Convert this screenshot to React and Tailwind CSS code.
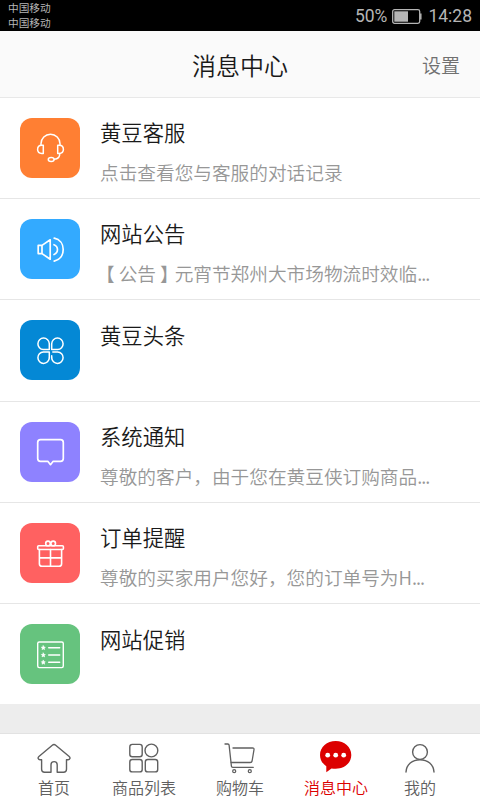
const line = {
  fill: 'none',
  stroke: 'currentColor',
  strokeLinecap: 'round',
  strokeLinejoin: 'round',
};

function HeadsetIcon() {
  return (
    <svg {...line} strokeWidth="1.5" viewBox="0 0 60 60" className="size-[60px]">
      <path d="M21 27v-1.200a9.500 9.500 0 0 1 19 0V27" />
      <path d="M23.300 27.200h-1.500c-2.700 0-4.200 1.800-4.200 4.100s1.500 4.100 4.200 4.100h1.500z" />
      <path d="M37.700 27.200h1.500c2.700 0 4.200 1.800 4.200 4.100s-1.500 4.100-4.200 4.100h-1.500z" />
      <path d="M39.800 35.500c0 3.500-1.800 5.500-5.500 5.800" />
      <ellipse cx="31.200" cy="41.500" rx="2.900" ry="2" />
    </svg>
  );
}

function SpeakerIcon() {
  return (
    <svg {...line} strokeWidth="1.7" viewBox="0 0 60 60" className="size-[60px]">
      <path d="M22 26.400h-3.800v8.200H22zM22 26.400l8.200-5.600v19.400L22 34.600" />
      <path d="M34 25.700a5.200 5.200 0 0 1 0 9.800" />
      <path d="M34.200 19.200c5.800 1.200 9 5.900 9 11.400s-3.200 10.200-9 11.500" />
    </svg>
  );
}

function CloverIcon() {
  return (
    <svg {...line} strokeWidth="1.5" viewBox="0 0 60 60" className="size-[60px]">
      <path d="M29.300 29.500h-6a5.700 5.700 0 1 1 6-5.900z" />
      <path d="M31.700 29.500h6a5.700 5.700 0 1 0-6-5.900z" />
      <path d="M29.300 32h-6a5.700 5.700 0 1 0 6 5.900z" />
      <path d="M32.800 32h4.900a5.700 5.700 0 1 1-6 5.900v-2.200" />
    </svg>
  );
}

function BubbleIcon() {
  return (
    <svg {...line} strokeWidth="1.7" viewBox="0 0 60 60" className="size-[60px]">
      <path d="M20.500 17.700h20a2.800 2.800 0 0 1 2.800 2.800v16a2.800 2.800 0 0 1-2.800 2.800h-7.300l-2.700 3.400-2.700-3.400h-7.300a2.800 2.800 0 0 1-2.800-2.800v-16a2.800 2.800 0 0 1 2.800-2.800z" />
    </svg>
  );
}

function GiftIcon() {
  return (
    <svg {...line} strokeWidth="1.600" viewBox="0 0 60 60" className="size-[60px]">
      <rect x="17.700" y="22.800" width="25.700" height="3.700" rx="1" />
      <path d="M19.400 26.500v14.200c0 1.600 1 2.600 2.600 2.600h17c1.600 0 2.600-1 2.600-2.600V26.500M30.500 26.500v16.800M19.400 34.900h22.200" />
      <circle cx="28" cy="20.400" r="2.300" />
      <circle cx="33.200" cy="20.400" r="2.300" />
    </svg>
  );
}

function ListIcon() {
  const star = (y) => (
    <path
      key={y}
      d={`M23.300 ${y - 2}l.6 1.300 1.400.2-1 1 .3 1.400-1.300-.7-1.300.7.300-1.400-1-1 1.400-.2z`}
      fill="currentColor"
      strokeWidth="0.600"
    />
  );
  return (
    <svg {...line} strokeWidth="1.400" viewBox="0 0 60 60" className="size-[60px]">
      <rect x="17.700" y="18" width="25.600" height="25.600" rx="1.500" />
      {[23.700, 31, 38.300].map(star)}
      <path d="M28.700 23.700h11M28.700 31h11M28.700 38.300h11" />
    </svg>
  );
}

function HomeIcon() {
  return (
    <svg {...line} strokeWidth="1.400" viewBox="0 0 36 32" className="h-8 w-9">
      <path d="M18 2.500c.6 0 1.100.2 1.700.7l13.500 11.300c1.500 1.300.7 3.200-1.100 3.200h-1.600v9.500c0 2-1 3-3 3h-6.300v-7.400c0-4.200-6.200-4.200-6.200 0v7.400H8.600c-2 0-3-1-3-3v-9.500H4c-1.800 0-2.600-1.900-1.100-3.200L16.300 3.200c.6-.5 1.100-.7 1.700-.7z" />
    </svg>
  );
}

function GoodsIcon() {
  return (
    <svg {...line} strokeWidth="1.400" viewBox="0 0 36 32" className="h-8 w-9">
      <rect x="3.800" y="2.400" width="12.400" height="12.400" rx="2.500" />
      <circle cx="25.400" cy="8.500" r="6.400" />
      <rect x="3.800" y="17.500" width="12.400" height="12.400" rx="2.500" />
      <rect x="19.300" y="17.500" width="12.400" height="12.400" rx="2.500" />
    </svg>
  );
}

function CartIcon() {
  return (
    <svg {...line} strokeWidth="1.300" viewBox="0 0 36 32" className="h-8 w-9">
      <path d="M3 2h2.800c.8 0 1.200.4 1.300 1.200l2.300 20.900c.1.800.5 1.200 1.300 1.200h20.600" />
      <path d="M11 6h19.500c1.200 0 1.700.6 1.500 1.700l-1.900 11.300c-.2 1-.8 1.500-1.800 1.500H9.200" />
      <circle cx="12.200" cy="29.200" r="1.500" />
      <circle cx="27.800" cy="29.200" r="1.500" />
    </svg>
  );
}

function ChatIcon() {
  return (
    <svg viewBox="0 0 36 32" className="h-8 w-9 overflow-visible">
      <path
        fill="currentColor"
        d="M17.700-1c8.700 0 15.600 6 15.600 13.900 0 8-6.900 13.800-15.600 13.800-1.500 0-2.800-.1-4.200-.3L8.300 30.200v-5.900C4.500 21.700 2 17.700 2 12.900 2 5 9-1 17.700-1z"
      />
      <circle cx="9.700" cy="13.200" r="2.400" fill="#fff" />
      <circle cx="17.700" cy="13.200" r="2.400" fill="#fff" />
      <circle cx="25.700" cy="13.200" r="2.400" fill="#fff" />
    </svg>
  );
}

function UserIcon() {
  return (
    <svg {...line} strokeWidth="1.400" viewBox="0 0 36 32" className="h-8 w-9">
      <circle cx="18" cy="10" r="7.400" />
      <path d="M4 30c.4-7.500 6.300-12.300 14-12.300S31.600 22.500 32 30" />
    </svg>
  );
}

// Half-width brackets, centred in a full character cell.
const noticeText = (
  <>
    <span className="ml-[5.33px] mr-1 [font-feature-settings:'halt']">【</span>
    公告
    <span className="ml-1 mr-[5.33px] [font-feature-settings:'halt']">】</span>
    元宵节郑州大市场物流时效临
  </>
);

const messages = [
  { title: '黄豆客服', text: '点击查看您与客服的对话记录', color: 'bg-[#ff7f33]', Icon: HeadsetIcon },
  { title: '网站公告', text: noticeText, more: true, color: 'bg-[#33aaff]', Icon: SpeakerIcon },
  { title: '黄豆头条', text: '', color: 'bg-[#0488d5]', Icon: CloverIcon },
  { title: '系统通知', text: '尊敬的客户，由于您在黄豆侠订购商品', more: true, color: 'bg-[#8e82ff]', Icon: BubbleIcon },
  { title: '订单提醒', text: '尊敬的买家用户您好，您的订单号为H', more: true, color: 'bg-[#ff6161]', Icon: GiftIcon },
  { title: '网站促销', text: '', color: 'bg-[#66c37e]', Icon: ListIcon },
];

const tabs = [
  { label: '首页', Icon: HomeIcon },
  { label: '商品列表', Icon: GoodsIcon },
  { label: '购物车', Icon: CartIcon },
  { label: '消息中心', Icon: ChatIcon, active: true },
  { label: '我的', Icon: UserIcon },
];

function StatusBar() {
  return (
    <div className="flex h-[31px] items-center justify-between bg-black px-2 text-[#b5b5b5]">
      <div className="pb-0.5 text-[10.67px] leading-[15px]">
        <div>中国移动</div>
        <div>中国移动</div>
      </div>
      <div className="flex items-center pt-0.5 font-[Roboto] text-[17.5px] leading-none">
        <span>50%</span>
        <svg viewBox="0 0 30 15" className="-mt-px ml-[5px] mr-[6px] h-[15px] w-[30px]">
          <rect x="0.700" y="0.700" width="27" height="13.600" rx="1.800" fill="none" stroke="currentColor" strokeWidth="1.300" />
          <rect x="2.300" y="2.300" width="13.700" height="10.400" fill="currentColor" />
          <path d="M28.800 4.500v6" stroke="currentColor" strokeWidth="1.500" />
        </svg>
        <span>14:28</span>
      </div>
    </div>
  );
}

export default function App() {
  return (
    <div className="flex h-[800px] w-[480px] flex-col overflow-hidden bg-[#ededed] font-['Noto_Sans_CJK_SC',sans-serif]">
      <StatusBar />
      <header className="grid h-[66.67px] grid-cols-[1fr_auto_1fr] items-center border-b border-[#e8e8e8] bg-[#fafafa] px-5 pt-[3px]">
        <h1 className="col-start-2 text-2xl font-[350] text-[#1a1a1a]">消息中心</h1>
        <button className="justify-self-end text-[19px] font-[350] text-[#707070]">设置</button>
      </header>
      <main className="flex-1">
        {messages.map(({ title, text, more, color, Icon }) => (
          <article
            key={title}
            className="flex h-[101.33px] gap-5 border-b border-[#e6e6e6] bg-white pl-5 pt-5 last:h-[99.67px] last:border-b-0"
          >
            <div className={`size-[60px] shrink-0 overflow-hidden rounded-[12px] text-white ${color}`}>
              <Icon />
            </div>
            <div className="-mt-[1.5px] whitespace-nowrap">
              <h2 className="text-[21.33px] font-[350] leading-8 text-[#1a1a1a]">{title}</h2>
              <p className="mt-2 text-[18.67px] font-[350] leading-8 text-[#979797]">
                {text}
                {more && <span className="tracking-[-1px]">...</span>}
              </p>
            </div>
          </article>
        ))}
      </main>
      <nav className="grid h-[67px] grid-cols-[108px_72px_120px_72px_96px] border-t border-[#e2e2e2] bg-white">
        {tabs.map(({ label, Icon, active }) => (
          <button
            key={label}
            className={`flex flex-col items-center pt-2 text-base font-[350] leading-6 ${active ? 'text-[#dc0000]' : 'text-[#606060]'}`}
          >
            <Icon />
            <span className="mt-px whitespace-nowrap">{label}</span>
          </button>
        ))}
      </nav>
    </div>
  );
}
